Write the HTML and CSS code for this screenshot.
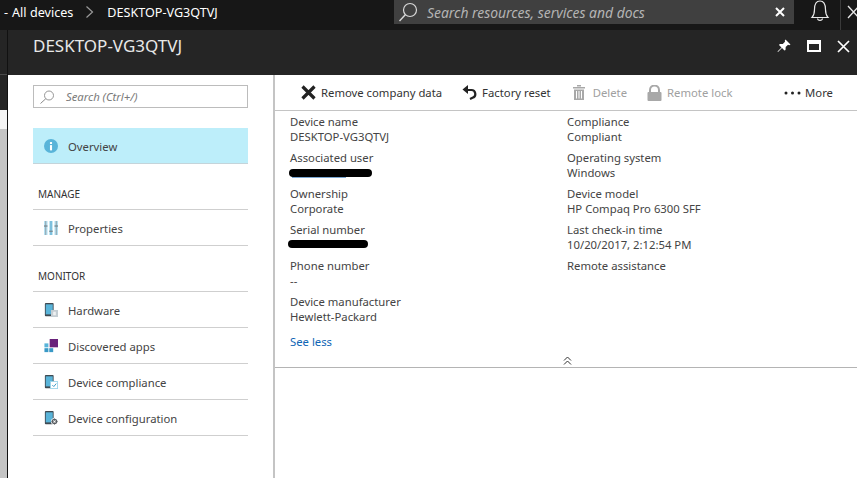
FILE: index.html
```html
<!DOCTYPE html>
<html lang="en">

<head>
    <meta charset="UTF-8">
    <title>DESKTOP-VG3QTVJ</title>

    <link rel="stylesheet" href="styles.css">
</head>

<body>
    <div class="topbar">
        <div class="crumbs">
            <span class="crumb-dash">-</span>
            <span>All devices</span>
            <svg class="crumb-sep" width="10" height="14" viewBox="0 0 10 14"><path d="M1.5 1.5 7.5 7l-6 5.500" fill="none" stroke="#9a9a9a" stroke-width="1.200"/></svg>
            <span>DESKTOP-VG3QTVJ</span>
        </div>
        <div class="searchbox">
            <svg width="22" height="22" viewBox="0 0 22 22"><circle cx="13" cy="9" r="6.500" fill="none" stroke="#d8d8d8" stroke-width="1.200"/><path d="M8.500 13.500 2.500 20" stroke="#d8d8d8" stroke-width="1.400"/></svg>
            <span class="searchbox-text">Search resources, services and docs</span>
            <svg class="searchbox-clear" width="10" height="10" viewBox="0 0 10 10"><path d="M1 1l8 8M9 1 1 9" stroke="#fff" stroke-width="2"/></svg>
        </div>
        <svg class="bell" width="20" height="24" viewBox="0 0 20 24"><path d="M2 17.500h16c-1.800-2-2.500-3.500-2.500-8C15.500 4 13.500 1 10 1S4.500 4 4.500 9.500c0 4.500-.7 6-2.500 8z" fill="none" stroke="#e8e8e8" stroke-width="1.200"/><path d="M7.500 18.500c.3 2.600 4.700 2.600 5 0" fill="none" stroke="#e8e8e8" stroke-width="1.200"/></svg>
        <div class="topbar-sep"></div>
        <svg class="topbar-close" width="14" height="16" viewBox="0 0 14 16"><path d="M1 2l11 12M12 2 1 14" stroke="#e8e8e8" stroke-width="1.300"/></svg>
    </div>

    <div class="main">
        <div class="strip">
            <div class="strip-dark"></div>
            <div class="strip-dark2"></div>
            <div class="strip-white"></div>
            <div class="strip-grey"></div>
        </div>

        <div class="blade">
            <div class="blade-header">
                <h1>DESKTOP-VG3QTVJ</h1>
                <div class="blade-actions">
                    <svg width="14" height="14" viewBox="0 0 14 14"><path d="M8.500 0.500 13.500 5.500 12.300 6.200 11 5.700 8.700 8 8.500 11 7.500 11.500 5 9 1 13 .5 12.500 4.500 8.500 2 6 2.800 5 5.800 5 8 2.800 7.800 1.500z" fill="#fff"/></svg>
                    <svg width="14" height="12" viewBox="0 0 14 12"><path d="M0 0h14v12H0zM2 4v6h10V4z" fill="#fff" fill-rule="evenodd"/></svg>
                    <svg width="13" height="13" viewBox="0 0 13 13"><path d="M1 1l11 11M12 1 1 12" stroke="#fff" stroke-width="1.700"/></svg>
                </div>
            </div>

            <div class="blade-body">
                <div class="sidebar">
                    <div class="sidebar-search">
                        <svg width="16" height="14" viewBox="0 0 16 14"><circle cx="10" cy="5.500" r="4.500" fill="none" stroke="#8a8a8a" stroke-width="0.900"/><path d="M6.800 8.700 1.500 13.500" stroke="#8a8a8a" stroke-width="1"/></svg>
                        <span>Search (Ctrl+/)</span>
                    </div>

                    <a class="nav-item nav-item-active">
                        <svg class="nav-icon" width="14" height="14" viewBox="0 0 16 16"><circle cx="8" cy="8" r="8" fill="#59b4d9"/><rect x="6.800" y="7" width="2.400" height="6" fill="#fff"/><rect x="6.800" y="3.500" width="2.400" height="2.200" fill="#fff"/></svg>
                        <span>Overview</span>
                    </a>

                    <div class="nav-heading">MANAGE</div>
                    <a class="nav-item">
                        <svg class="nav-icon" width="14" height="14" viewBox="0 0 16 16"><rect x="0" y="0" width="4" height="16" fill="#b3dff0"/><rect x="6" y="0" width="4" height="16" fill="#b3dff0"/><rect x="12" y="0" width="4" height="16" fill="#b3dff0"/><rect x="1.500" y="0" width="1" height="16" fill="#8f9ca3"/><rect x="7.500" y="0" width="1" height="16" fill="#3999c6"/><rect x="13.500" y="0" width="1" height="16" fill="#8f9ca3"/><rect x="0" y="5" width="4" height="1.500" fill="#7a8a92"/><rect x="6" y="11" width="4" height="1.500" fill="#7a8a92"/><rect x="12" y="5" width="4" height="1.500" fill="#7a8a92"/></svg>
                        <span>Properties</span>
                    </a>

                    <div class="nav-heading">MONITOR</div>
                    <a class="nav-item">
                        <svg class="nav-icon" width="14" height="14" viewBox="0 0 16 16"><rect x="1" y="0" width="10" height="15" rx="1" fill="#3f4a52"/><rect x="2" y="1.500" width="8" height="11.500" fill="#59b4d9"/><rect x="8" y="8" width="8" height="8" fill="#c4cdd2"/><rect x="10.500" y="10" width="3" height="4" fill="#eef1f2"/></svg>
                        <span>Hardware</span>
                    </a>
                    <a class="nav-item">
                        <svg class="nav-icon" width="14" height="14" viewBox="0 0 16 16"><rect x="6.500" y="0" width="9.500" height="9.500" fill="#68217a"/><rect x="0.500" y="5" width="4.500" height="4.500" fill="#59b4d9"/><rect x="0.500" y="10.500" width="4.500" height="4.500" fill="#3999c6"/><rect x="6" y="10.500" width="4.500" height="4.500" fill="#3999c6"/></svg>
                        <span>Discovered apps</span>
                    </a>
                    <a class="nav-item">
                        <svg class="nav-icon" width="14" height="14" viewBox="0 0 16 16"><rect x="1" y="0" width="10" height="15" rx="1" fill="#3f4a52"/><rect x="2" y="1.500" width="8" height="11.500" fill="#59b4d9"/><rect x="7.500" y="7.500" width="8" height="8" fill="#fff" stroke="#9bd4ea"/><path d="M9.500 11.500l1.700 1.700 2.800-3.400" fill="none" stroke="#3999c6" stroke-width="1.100"/></svg>
                        <span>Device compliance</span>
                    </a>
                    <a class="nav-item">
                        <svg class="nav-icon" width="14" height="14" viewBox="0 0 16 16"><rect x="1" y="0" width="10" height="15" rx="1" fill="#3f4a52"/><rect x="2" y="1.500" width="8" height="11.500" fill="#59b4d9"/><circle cx="12" cy="12" r="4" fill="#fff"/><circle cx="12" cy="12" r="2.400" fill="none" stroke="#5a5f63" stroke-width="1.600"/><path d="M12 8.500v7M8.500 12h7" stroke="#5a5f63" stroke-width="1"/><circle cx="12" cy="12" r="1" fill="#fff"/></svg>
                        <span>Device configuration</span>
                    </a>
                </div>

                <div class="content">
                    <div class="commands">
                        <div class="command cmd-remove">
                            <svg width="15" height="15" viewBox="0 0 15 15"><path d="M1.500 1.500l12 12M13.500 1.500l-12 12" stroke="#222" stroke-width="3.200"/></svg>
                            <span>Remove company data</span>
                        </div>
                        <div class="command cmd-reset">
                            <svg width="15" height="15" viewBox="0 0 15 15"><path d="M4 5h5a4 4 0 0 1 1.500 7.800L8 14" fill="none" stroke="#222" stroke-width="2.200"/><path d="M.5 4.500 6 0v9z" fill="#222"/></svg>
                            <span>Factory reset</span>
                        </div>
                        <div class="command command-off cmd-delete">
                            <svg width="12" height="15" viewBox="0 0 12 15"><path d="M0 2h12v1.500H0zM4 0h4v1.500H4zM1 4.500h10V15H1zM3 6v7.500h1V6zm2.500 0v7.500h1V6zM8 6v7.500h1V6z" fill="#a8a8a8" fill-rule="evenodd"/></svg>
                            <span>Delete</span>
                        </div>
                        <div class="command command-off cmd-lock">
                            <svg width="15" height="16" viewBox="0 0 15 16"><path d="M3 7V5a4.500 4.500 0 0 1 9 0v2" fill="none" stroke="#a8a8a8" stroke-width="2"/><rect x="0.500" y="7" width="14" height="9" rx="1" fill="#a8a8a8"/></svg>
                            <span>Remote lock</span>
                        </div>
                        <div class="command cmd-more">
                            <svg width="17" height="4" viewBox="0 0 17 4"><circle cx="2" cy="2" r="1.500" fill="#222"/><circle cx="8.500" cy="2" r="1.500" fill="#222"/><circle cx="15" cy="2" r="1.500" fill="#222"/></svg>
                            <span>More</span>
                        </div>
                    </div>

                    <div class="essentials">
                        <div class="fields">
                            <div class="field"><div>Device name</div><div>DESKTOP-VG3QTVJ</div></div>
                            <div class="field"><div>Compliance</div><div>Compliant</div></div>
                            <div class="field"><div>Associated user</div><div class="redacted"><i class="peek"></i><i class="blob blob-user"></i></div></div>
                            <div class="field"><div>Operating system</div><div>Windows</div></div>
                            <div class="field"><div>Ownership</div><div>Corporate</div></div>
                            <div class="field"><div>Device model</div><div>HP Compaq Pro 6300 SFF</div></div>
                            <div class="field"><div>Serial number</div><div class="redacted"><i class="blob blob-serial"></i></div></div>
                            <div class="field"><div>Last check-in time</div><div>10/20/2017, 2:12:54 PM</div></div>
                            <div class="field"><div>Phone number</div><div>--</div></div>
                            <div class="field"><div>Remote assistance</div></div>
                            <div class="field"><div>Device manufacturer</div><div>Hewlett-Packard</div></div>
                        </div>
                        <a class="see-less">See less</a>
                        <div class="collapse">
                            <svg width="9" height="9" viewBox="0 0 9 9"><path d="M1 4.500 4.500 1 8 4.500M1 8.500 4.500 5 8 8.500" fill="none" stroke="#333" stroke-width="1"/></svg>
                        </div>
                    </div>
                </div>
            </div>
        </div>
    </div>
</body>

</html>
```

FILE: styles.css
```css
html,
body {
    margin: 0;
    height: 100%;
    overflow: hidden;
}

body {
    width: 857px;
    height: 478px;
    background-color: #fff;
    color: #444;
    font-family: 'Noto Sans', 'Open Sans', sans-serif;
    font-size: 11.3px;
    display: flex;
    flex-direction: column;
}

svg {
    display: block;
    flex: none;
}

/* top bar */
.topbar {
    height: 30px;
    flex: none;
    background-color: #171717;
    color: #fff;
    display: flex;
    align-items: flex-start;
    overflow: hidden;
}

.crumbs {
    width: 394px;
    height: 24px;
    flex: none;
    display: flex;
    align-items: center;
    padding-left: 4px;
    box-sizing: border-box;
    font-size: 12.6px;
}

.crumb-dash {
    margin-right: 4px;
}

.crumb-sep {
    margin: 0 12px 0 12px;
}

.searchbox {
    width: 400px;
    height: 24px;
    flex: none;
    background-color: #404040;
    display: flex;
    align-items: center;
    padding-left: 3px;
    box-sizing: border-box;
}

.searchbox-text {
    margin-left: 8px;
    font-style: italic;
    font-size: 13.9px;
    color: #b4b4b4;
}

.searchbox-clear {
    margin-left: auto;
    margin-right: 9px;
}

.bell {
    margin: 0 0 0 16px;
}

.topbar-sep {
    width: 1px;
    height: 30px;
    flex: none;
    background-color: #3a3a3a;
    margin-left: 10px;
}

.topbar-close {
    margin: 4px 0 0 6px;
}

/* page under the top bar */
.main {
    flex: 1;
    display: flex;
    min-height: 0;
}

.strip {
    width: 7px;
    flex: none;
    display: flex;
    flex-direction: column;
    background-color: #c4c4c4;
    border-right: 1px solid #111;
}

.strip-dark {
    height: 44px;
    background-color: #252525;
    border-bottom: 1px solid #4a4a4a;
}

.strip-dark2 {
    height: 35px;
    background-color: #252525;
}

.strip-white {
    height: 19px;
    background-color: #f4f4f4;
}

.strip-grey {
    flex: 1;
}

.blade {
    flex: 1;
    min-width: 0;
    display: flex;
    flex-direction: column;
}

.blade-header {
    height: 45px;
    flex: none;
    background-color: #252525;
    color: #e8e8e8;
    display: flex;
    align-items: flex-start;
    justify-content: space-between;
}

.blade-header h1 {
    margin: 4px 0 0 25px;
    font-size: 17px;
    font-weight: 400;
}

.blade-actions {
    display: flex;
    align-items: center;
    gap: 16px;
    margin: 9px 7px 0 0;
}

.blade-body {
    flex: 1;
    display: flex;
    min-height: 0;
}

/* left menu */
.sidebar {
    width: 267px;
    flex: none;
    box-sizing: border-box;
    padding: 10px 25px 0;
    border-right: 2px solid #c4c4c4;
}

.sidebar-search {
    height: 23px;
    box-sizing: border-box;
    border: 1px solid #bcbcbc;
    display: flex;
    align-items: center;
    padding-left: 5px;
    gap: 11px;
    font-style: italic;
    color: #7a7a7a;
    margin-bottom: 20px;
}

.nav-item {
    height: 36px;
    box-sizing: border-box;
    border-bottom: 1px solid #cfcfcf;
    display: flex;
    align-items: center;
    padding-left: 11px;
    gap: 10px;
}

.nav-item span {
    margin-top: 2px;
}

.nav-item-active {
    background-color: #bdeefa;
    border-bottom-color: #c4d4da;
}

.nav-heading {
    height: 46px;
    box-sizing: border-box;
    padding: 23px 0 0 5px;
    border-bottom: 1px solid #cfcfcf;
    font-size: 10px;
    line-height: 15px;
    color: #333;
}

/* right side */
.content {
    flex: 1;
    min-width: 0;
}

.commands {
    height: 36px;
    box-sizing: border-box;
    border-bottom: 1px solid #c4c4c4;
    display: flex;
    align-items: center;
    color: #333;
}

.command {
    display: flex;
    align-items: center;
    gap: 5px;
}

.command-off {
    color: #a0a0a0;
}

.cmd-remove {
    margin-left: 26px;
}

.cmd-reset {
    margin-left: 20px;
}

.cmd-delete {
    margin-left: 22px;
    gap: 8px;
}

.cmd-lock {
    margin-left: 20px;
}

.cmd-more {
    margin-left: auto;
    margin-right: 24px;
    gap: 4px;
}

.essentials {
    height: 257px;
    box-sizing: border-box;
    border-bottom: 1px solid #b4b4b4;
    padding: 3px 0 0 15px;
    position: relative;
}

.fields {
    display: grid;
    grid-template-columns: 277px 1fr;
    grid-auto-rows: 36px;
}

.field {
    line-height: 15px;
}

.redacted {
    height: 15px;
    position: relative;
}

.blob {
    display: block;
    position: absolute;
    height: 8px;
    background-color: #000;
    border-radius: 4px;
}

.blob-user {
    width: 83px;
    top: 4px;
    left: -1px;
}

.blob-serial {
    width: 80px;
    top: 3px;
    left: -2px;
}

.peek {
    display: block;
    position: absolute;
    left: 2px;
    top: 11px;
    width: 54px;
    height: 2px;
    background-color: #7aa6d0;
}

.see-less {
    display: block;
    color: #0f66b5;
    line-height: 15px;
    margin-top: 4px;
}

.collapse {
    position: absolute;
    left: 288px;
    bottom: 2px;
}
```
